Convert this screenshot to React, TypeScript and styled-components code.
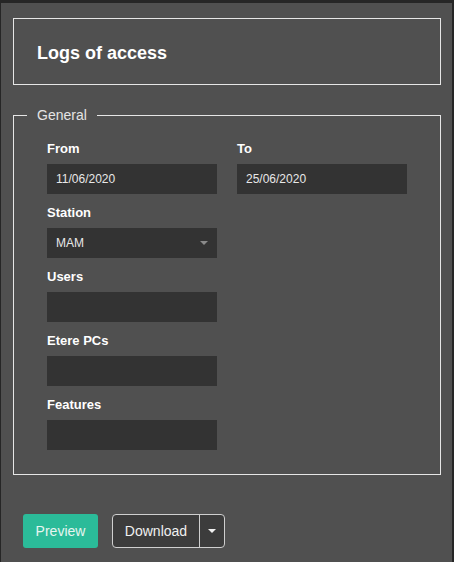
import React from 'react';
import styled, { createGlobalStyle } from 'styled-components';

const GlobalStyle = createGlobalStyle`
  html, body {
    margin: 0;
    padding: 0;
    background: #262626;
  }
  body {
    font-family: 'Liberation Sans', Arial, sans-serif;
  }
`;

const Page = styled.div`
  box-sizing: border-box;
  width: 451px;
  height: 559px;
  margin: 3px 0 0 1px;
  background: #505050;
  padding: 15px 0 0 12px;
  color: #fff;
`;

const Header = styled.div`
  box-sizing: border-box;
  width: 428px;
  height: 67px;
  border: 1px solid #e6e6e6;
  padding: 3px 0 0 23px;
  display: flex;
  align-items: center;
`;

const Title = styled.h1`
  margin: 0;
  font-size: 18px;
  font-weight: bold;
  color: #fff;
`;

const Fieldset = styled.fieldset`
  box-sizing: border-box;
  width: 428px;
  margin: 22px 0 0 0;
  border: 1px solid #e6e6e6;
  padding: 18px 0 24px 13px;
`;

const Legend = styled.legend`
  padding: 0 10px;
  font-size: 14px;
  line-height: 16px;
  color: #e4e4e4;
`;

const Grid = styled.div`
  display: grid;
  grid-template-columns: 170px 170px;
  column-gap: 20px;
  row-gap: 11px;
  padding-left: 20px;
`;

const Field = styled.div`
  display: flex;
  flex-direction: column;
`;

const Label = styled.label`
  font-size: 13px;
  font-weight: bold;
  line-height: 16px;
  margin-bottom: 7px;
  color: #fff;
`;

const Input = styled.div`
  box-sizing: border-box;
  height: 30px;
  background: #333333;
  padding: 0 9px;
  display: flex;
  align-items: center;
  justify-content: space-between;
  font-size: 12px;
  color: #e8e8e8;
`;

const Caret = styled.span<{ color?: string }>`
  width: 0;
  height: 0;
  border-left: 4px solid transparent;
  border-right: 4px solid transparent;
  border-top: 4px solid ${(p) => p.color || '#8a8a8a'};
`;

const Actions = styled.div`
  display: flex;
  gap: 14px;
  margin: 39px 0 0 10px;
`;

const PrimaryButton = styled.button`
  box-sizing: border-box;
  height: 34px;
  width: 75px;
  border: none;
  border-radius: 3px;
  background: #2bbb99;
  color: #e6f5f0;
  font-family: inherit;
  font-size: 14px;
`;

const SplitButton = styled.div`
  box-sizing: border-box;
  height: 34px;
  display: flex;
  border: 1px solid #cfcfcf;
  border-radius: 4px;
  background: #3c3c3c;
  overflow: hidden;
`;

const SplitMain = styled.span`
  width: 86px;
  display: flex;
  align-items: center;
  justify-content: center;
  font-size: 14px;
  color: #f0f0f0;
  border-right: 1px solid #cfcfcf;
`;

const SplitToggle = styled.span`
  width: 24px;
  display: flex;
  align-items: center;
  justify-content: center;
`;

const fields = [
  { label: 'Users' },
  { label: 'Etere PCs' },
  { label: 'Features' },
];

const App: React.FC = () => {
  return (
    <>
      <GlobalStyle />
      <Page>
        <Header>
          <Title>Logs of access</Title>
        </Header>

        <Fieldset>
          <Legend>General</Legend>
          <Grid>
            <Field>
              <Label>From</Label>
              <Input>11/06/2020</Input>
            </Field>
            <Field>
              <Label>To</Label>
              <Input>25/06/2020</Input>
            </Field>
            <Field>
              <Label>Station</Label>
              <Input>
                MAM
                <Caret />
              </Input>
            </Field>
            <div />
            {fields.map((f) => (
              <React.Fragment key={f.label}>
                <Field>
                  <Label>{f.label}</Label>
                  <Input />
                </Field>
                <div />
              </React.Fragment>
            ))}
          </Grid>
        </Fieldset>

        <Actions>
          <PrimaryButton>Preview</PrimaryButton>
          <SplitButton>
            <SplitMain>Download</SplitMain>
            <SplitToggle>
              <Caret color="#f0f0f0" />
            </SplitToggle>
          </SplitButton>
        </Actions>
      </Page>
    </>
  );
};

export default App;
